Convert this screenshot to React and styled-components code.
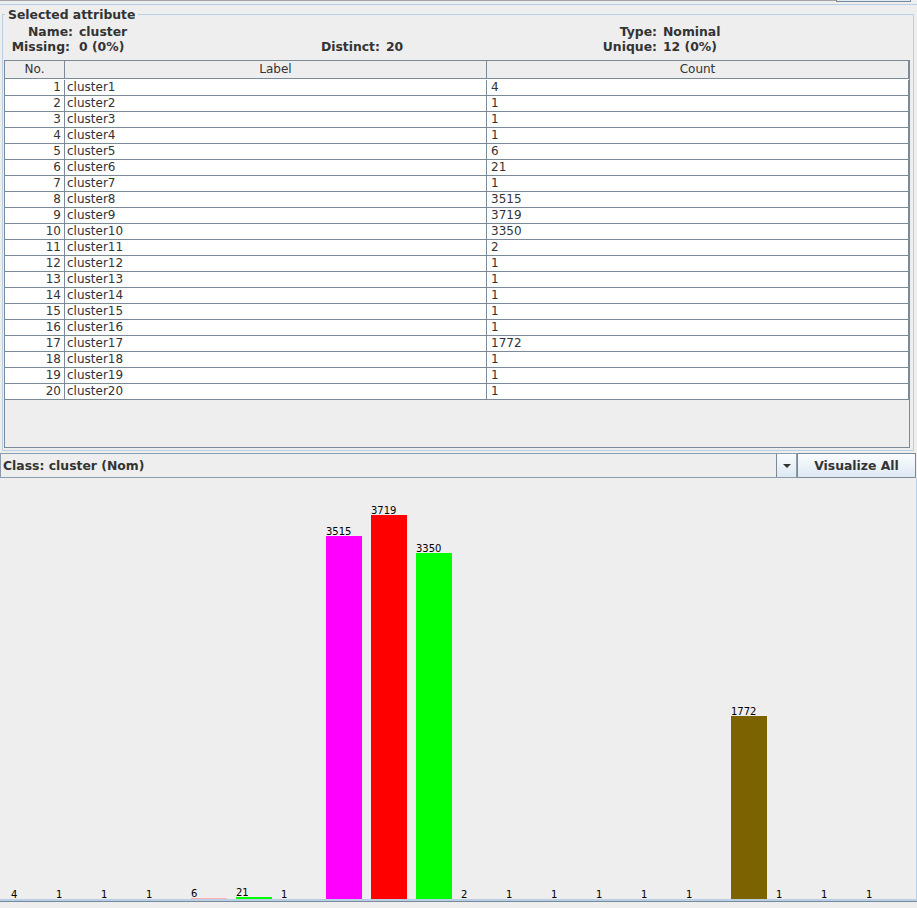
import { createGlobalStyle, styled } from 'styled-components';

const GlobalStyle = createGlobalStyle`
    html, body {
        margin: 0;
        padding: 0;
        background: #eeeeee;
    }
`;

const rows = [
    ['cluster1', 4],
    ['cluster2', 1],
    ['cluster3', 1],
    ['cluster4', 1],
    ['cluster5', 6],
    ['cluster6', 21],
    ['cluster7', 1],
    ['cluster8', 3515],
    ['cluster9', 3719],
    ['cluster10', 3350],
    ['cluster11', 2],
    ['cluster12', 1],
    ['cluster13', 1],
    ['cluster14', 1],
    ['cluster15', 1],
    ['cluster16', 1],
    ['cluster17', 1772],
    ['cluster18', 1],
    ['cluster19', 1],
    ['cluster20', 1],
];

// colours of the visible bars, by row index
const barColors = {
    4: '#ffafaf',
    5: '#00ff00',
    7: '#ff00ff',
    8: '#ff0000',
    9: '#00ff00',
    16: '#7c6200',
};

const Page = styled.div`
    width: 917px;
    height: 908px;
    display: flex;
    flex-direction: column;
    overflow: hidden;
    background: #eeeeee;
    color: #333333;
    font-family: "DejaVu Sans", "Liberation Sans", sans-serif;
`;

const TopStrip = styled.div`
    display: flex;
    height: 4px;
    border-bottom: 1px solid #b8cfe5;
`;

const TopField = styled.div`
    flex: 1;
    height: 1px;
    background: #a3a3a3;
`;

const TopButton = styled.div`
    width: 73px;
    height: 1px;
    margin-right: 6px;
    border: 1px solid #7a8a99;
    border-top: none;
    background: #dde8f3;
`;

const AttributeBox = styled.fieldset`
    margin: 2px 3px 0 2px;
    padding: 2px 3px 2px 1px;
    border: 1px solid #b8cfe5;
    min-width: 0;
`;

const Title = styled.legend`
    margin-left: 1px;
    padding: 0 3px;
    font-size: 12.4px;
    font-weight: bold;
    line-height: 15px;
    color: #333333;
`;

const InfoGrid = styled.div`
    display: grid;
    grid-template-columns: 69px 248px 59px 181px 96px 1fr;
    grid-auto-rows: 15px;
    font-size: 12.4px;
    font-weight: bold;
    line-height: 15px;
    white-space: nowrap;
`;

const InfoLabel = styled.div`
    justify-self: end;
    padding-right: ${(p) => (p.$trail ? '3px' : '0')};
`;

const InfoValue = styled.div`
    padding-left: 6px;
`;

const ScrollPane = styled.div`
    margin-top: 6px;
    height: 388px;
    box-sizing: border-box;
    border: 1px solid #7a8a99;
    background: #eeeeee;
    overflow: hidden;
`;

const TableGrid = styled.div`
    display: grid;
    grid-template-columns: 60px 422px 422px;
`;

const TableBody = styled(TableGrid)`
    padding-top: 1px;
    background: #ffffff;
`;

const HeaderCell = styled.div`
    height: 18px;
    box-sizing: border-box;
    border-right: 1px solid #7a8a99;
    border-bottom: 1px solid #7a8a99;
    background: #eeeeee;
    text-align: center;
    font-size: 12px;
    line-height: 17px;
`;

const Cell = styled.div`
    height: 16px;
    box-sizing: border-box;
    padding: 0 ${(p) => (p.$align === 'right' ? '3px' : '2px')} 0 ${(p) => (p.$wide ? '4px' : '2px')};
    border-right: 1px solid #7a8a99;
    border-bottom: 1px solid #7a8a99;
    text-align: ${(p) => p.$align || 'left'};
    font-size: 12px;
    line-height: 15px;
    white-space: nowrap;
    overflow: hidden;
`;

const ClassRow = styled.div`
    display: flex;
    height: 25px;
    margin-top: 2px;
`;

const ClassSelect = styled.div`
    display: flex;
    width: 797px;
    box-sizing: border-box;
    border: 1px solid #8c9cac;
    background: #eeeeee;
`;

const ClassValue = styled.div`
    flex: 1;
    padding-left: 2px;
    font-size: 12.4px;
    font-weight: bold;
    line-height: 23px;
    white-space: nowrap;
`;

const ArrowButton = styled.div`
    width: 19px;
    display: flex;
    align-items: center;
    justify-content: center;
    border-left: 1px solid #7a8a99;
    background: linear-gradient(#fafcfd, #dde8f3);
`;

const ArrowDown = styled.div`
    width: 0;
    height: 0;
    border-left: 4.5px solid transparent;
    border-right: 4.5px solid transparent;
    border-top: 4px solid #333333;
`;

const VisualizeButton = styled.div`
    width: 119px;
    box-sizing: border-box;
    border: 1px solid #7a8a99;
    background: linear-gradient(#fbfdfe, #dde8f3);
    text-align: center;
    font-size: 12.4px;
    font-weight: bold;
    line-height: 23px;
`;

const HistogramPanel = styled.div`
    height: 421px;
    border-right: 1px solid #b8cfe5;
    border-bottom: 2px solid #b8cfe5;
`;

const BottomRule = styled.div`
    flex: 1;
    border-top: 1px solid #7a8a99;
`;

const CHART_H = 421;
const MAX = 3719;
const MAX_H = 384;

function Histogram() {
    return (
        <svg width="916" height={CHART_H}>
            {rows.map(([label, count], i) => {
                const x = 11 + 45 * i;
                const h = Math.round((count / MAX) * MAX_H);
                const top = CHART_H - h;
                return (
                    <g key={label}>
                        {h > 0 && (
                            <rect
                                x={x}
                                y={top}
                                width="36"
                                height={h}
                                fill={barColors[i] || '#000'}
                                shapeRendering="crispEdges"
                            />
                        )}
                        <text
                            x={x}
                            y={top - 1}
                            fontSize="10"
                            fontFamily='"DejaVu Sans", sans-serif'
                            fill="#000"
                        >
                            {count}
                        </text>
                    </g>
                );
            })}
        </svg>
    );
}

export default function App() {
    return (
        <Page>
            <GlobalStyle />
            <TopStrip>
                <TopField />
                <TopButton />
            </TopStrip>
            <AttributeBox>
                <Title>Selected attribute</Title>
                <InfoGrid>
                    <InfoLabel>Name:</InfoLabel>
                    <InfoValue>cluster</InfoValue>
                    <div />
                    <div />
                    <InfoLabel>Type:</InfoLabel>
                    <InfoValue>Nominal</InfoValue>
                    <InfoLabel $trail>Missing:</InfoLabel>
                    <InfoValue>0 (0%)</InfoValue>
                    <InfoLabel>Distinct:</InfoLabel>
                    <InfoValue>20</InfoValue>
                    <InfoLabel>Unique:</InfoLabel>
                    <InfoValue>12 (0%)</InfoValue>
                </InfoGrid>
                <ScrollPane>
                    <TableGrid>
                        <HeaderCell>No.</HeaderCell>
                        <HeaderCell>Label</HeaderCell>
                        <HeaderCell>Count</HeaderCell>
                    </TableGrid>
                    <TableBody>
                        {rows.map(([label, count], i) => [
                            <Cell key={`n${i}`} $align="right">
                                {i + 1}
                            </Cell>,
                            <Cell key={`l${i}`}>{label}</Cell>,
                            <Cell key={`c${i}`} $wide>
                                {count}
                            </Cell>,
                        ])}
                    </TableBody>
                </ScrollPane>
            </AttributeBox>
            <ClassRow>
                <ClassSelect>
                    <ClassValue>Class: cluster (Nom)</ClassValue>
                    <ArrowButton>
                        <ArrowDown />
                    </ArrowButton>
                </ClassSelect>
                <VisualizeButton>Visualize All</VisualizeButton>
            </ClassRow>
            <HistogramPanel>
                <Histogram />
            </HistogramPanel>
            <BottomRule />
        </Page>
    );
}
